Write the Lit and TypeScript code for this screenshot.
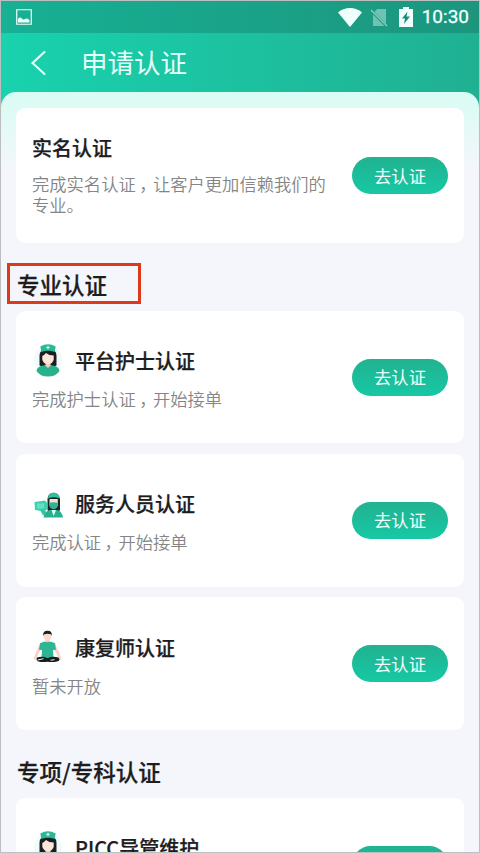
import { LitElement, html, css, svg } from "lit";
import { customElement, property } from "lit/decorators.js";

const nurse = svg`
  <circle cx="16" cy="17" r="14" fill="#f3fbfa"/>
  <path d="M7.500 13Q8 5 16 5t8.500 8v9.500Q21 24.500 16 24.500t-8.500-2z" fill="#182024"/>
  <path d="M4.500 28Q5 23.500 11 22.500l5-1 5 1q6 1 6.500 5.500-3.500 5.500-11.500 5.500T4.500 28z" fill="#28b28c"/>
  <path d="M13.500 18h5v4.800L16 25l-2.500-2.200z" fill="#f6cdb8"/>
  <path d="M10.300 13q2.200-1.200 3.700-3 3 2.500 7.700 2.500v4.500Q20 21 16 21.500q-4-.5-5.700-4.500z" fill="#fde6d9"/>
  <path d="M8.300 3.500Q16-.8 23.700 3.500L22.500 9Q16 6.500 9.500 9z" fill="#2bb896"/>
  <path d="M16 2.800v3.400M14.300 4.500h3.400" stroke="#d9fff4" stroke-width="1.200"/>`;

const staff = svg`
  <path d="M2.500 16 13 14.500l2 2v7l-3 2-9-1.500z" fill="#3ed0ad"/>
  <path d="M5 17.500h7v5H5z" fill="#65dec2"/>
  <path d="M8 24l4-1.500 3 5-4 2z" fill="#38c5a2"/>
  <path d="M15.500 13Q16 7 21.500 7T28 13v11q-2 3-6.500 3t-6-3z" fill="#1c2527"/>
  <path d="M11.500 31.500q1-6 6-7.500h8Q30 25.500 31 31.500z" fill="#25b18c"/>
  <path d="M17.500 13h8.300v6q-1 3.500-4.100 4Q18 22.500 17.500 19z" fill="#fbdccd"/>
  <path d="M17.500 16.800q4-1 8.300 0V20q-1.300 3-4.100 3.200-3-.2-4.200-3.200z" fill="#28b792"/>
  <path d="M16 12.500q0-6 5.700-6t5.800 6q-5.500-2.300-11.500 0z" fill="#2fc19d"/>
  <path d="m19.500 24 2.200 6 2.300-6z" fill="#e8fff8"/>`;

const therapist = svg`
  <path d="M8.500 13 4.500 21l-3 8 2 .8L7.500 22l4-6zM22.500 13l4 8 3 8-2 .8-4-7.800-4-6z" fill="#f6d5c5"/>
  <path d="M13.500 8h4v5h-4z" fill="#f2c5af"/>
  <ellipse cx="15.500" cy="6.200" rx="3.800" ry="4.700" fill="#fbdccc"/>
  <path d="M11.300 6Q10.500.8 15.500.8T19.700 6l-.8-1.800q-3.300-.8-6.600 0z" fill="#1b2022"/>
  <path d="M12.500 11.500q3 1.500 6 0l4.500 1.800 1 6.500-3 .2.500 7.500h-12L10 20l-3-.2 1-6.500z" fill="#2eb594"/>
  <path d="M5 27.500q5-1.500 10.500.2 5.500-1.700 11-.2 2.500 3-1.500 4-5 1-9.500.2-5 .8-9-.2-3-1-1.500-4z" fill="#171d1f"/>
  <path d="m5.500 30 6-1.300M18.500 30.200l4-.5" stroke="#edf4f2" stroke-width="1"/>`;

const icons: Record<string, unknown> = { nurse, staff, therapist };

const describe = (text: string) =>
  text.split("，").map((part, i) => (i ? html`<span class="comma">，</span>${part}` : part));

@customElement("cert-card")
export class CertCard extends LitElement {
  @property() heading = "";
  @property() note = "";
  @property() icon = "";

  static styles = css`
    :host {
      display: flex;
      align-items: center;
      justify-content: space-between;
      box-sizing: border-box;
      height: 132.800px;
      padding: 0 16px;
      border-radius: 9px;
      background: #fff;
      flex: none;
    }
    .info { width: 304px; padding-bottom: 2px; }
    .head { display: flex; align-items: center; height: 36px; gap: 11px; }
    .icon { width: 32px; height: 34px; flex: none; margin-bottom: 2px; }
    .heading {
      font-size: 20px;
      line-height: 28px;
      font-weight: 500;
      color: #1d1d1f;
      white-space: nowrap;
      -webkit-text-stroke: 0.25px #1d1d1f;
    }
    .note {
      margin-top: 9px;
      font-size: 17.3px;
      line-height: 21px;
      font-weight: 350;
      color: #858585;
    }
    .plain { padding-bottom: 2px; }
    .plain .head { height: 28px; }
    .plain .note { margin-top: 11.500px; line-height: 21px; }
    .comma { font-feature-settings: "halt"; padding: 0 0.3em 0 0.2em; }
    .go {
      width: 96px;
      height: 37px;
      padding: 0;
      border: 0;
      border-radius: 19px;
      background: linear-gradient(#21b291, #17c8a4);
      color: #effffb;
      font: 17.3px/36px "Noto Sans CJK SC", sans-serif;
    }
  `;

  render() {
    return html`
      <div class="info ${this.icon ? "" : "plain"}">
        <div class="head">
          ${this.icon
            ? html`<svg class="icon" viewBox="0 0 32 34">${icons[this.icon]}</svg>`
            : ""}
          <div class="heading">${this.heading}</div>
        </div>
        <div class="note">${describe(this.note)}</div>
      </div>
      <button class="go">去认证</button>
    `;
  }
}

@customElement("app-root")
export class AppRoot extends LitElement {
  static styles = css`
    :host {
      display: block;
      box-sizing: border-box;
      width: 480px;
      height: 853px;
      overflow: hidden;
      border: 1px solid #bbbfc0;
      font-family: "Noto Sans CJK SC", sans-serif;
      background: linear-gradient(90deg, #19d2ae, #20b092) 0 0 / 100% 130px no-repeat, #f4f6fb;
    }
    .status {
      display: flex;
      align-items: center;
      height: 32px;
      padding: 0 10px 0 15px;
      background: rgba(15, 45, 45, 0.2);
      color: #f1fffc;
    }
    .picture { width: 16px; height: 16px; margin-right: auto; }
    .wifi { width: 24px; height: 19px; }
    .sim { width: 18px; height: 19px; margin-left: 8px; }
    .battery { width: 14px; height: 20px; margin-left: 11px; }
    .time { margin-left: 9px; font: 400 19px/32px Roboto, sans-serif; -webkit-text-stroke: 0.3px; }
    .bar { display: flex; align-items: center; height: 59px; padding-left: 29px; }
    .back { width: 16px; height: 26px; }
    .title {
      margin-left: 35px;
      padding-bottom: 2px;
      font-size: 26.500px;
      line-height: 40px;
      color: #e6fff9;
    }
    .sheet {
      display: flex;
      flex-direction: column;
      height: 761px;
      box-sizing: border-box;
      padding: 16px 15px 0;
      border-radius: 15px 15px 0 0;
      background: linear-gradient(#d8fcf3, #f4f6fb 78px);
    }
    .first { height: 135px; }
    .section {
      height: 67.700px;
      padding: 9px 0 0 1px;
      box-sizing: border-box;
      flex: none;
      font-size: 22.500px;
      font-weight: 500;
      line-height: 65px;
      color: #1d1d1f;
      -webkit-text-stroke: 0.25px #1d1d1f;
    }
    .marked { position: relative; }
    .marked::after {
      content: "";
      position: absolute;
      left: -9px;
      top: 20px;
      width: 134px;
      height: 41px;
      box-sizing: border-box;
      border: 3px solid #dd3a1c;
    }
    .group { display: flex; flex-direction: column; gap: 10.600px; flex: none; }
  `;

  render() {
    return html`
      <div class="status">
        <svg class="picture" viewBox="0 0 16 16">
          <path d="M.75.75h14.500v14.500H.75z" fill="none" stroke="currentColor" stroke-width="1.200"/>
          <path d="M2 13.500V10l2-1.700 2.200 1.500 1.600 1 2-1.300 2.200.2 1.500 1.800v2z" fill="currentColor"/>
        </svg>
        <svg class="wifi" viewBox="0 0 24 19"><path d="M0 4.500Q5 0 12 0t12 4.500L12 19z" fill="currentColor"/></svg>
        <svg class="sim" viewBox="0 0 18 19">
          <path d="M7 1h9v14.500L4.500 4zM3 6.500 14.500 18H3z" fill="currentColor" opacity=".4"/>
          <path d="m1 2 16 16" stroke="currentColor" stroke-width="1.400" opacity=".5"/>
        </svg>
        <svg class="battery" viewBox="0 0 14 20">
          <path d="M4 0h6v2h4v18H0V2h4z" fill="currentColor"/>
          <path d="M8.500 4.500 3 11.500h3l-1 5.500 6-7.500H7.500z" fill="#1a8c76"/>
        </svg>
        <span class="time">10:30</span>
      </div>
      <div class="bar">
        <svg class="back" viewBox="0 0 16 26"><path d="M14.500 2 2.500 13l12 11" fill="none" stroke="#e6fff9" stroke-width="2.100" stroke-linecap="round"/></svg>
        <span class="title">申请认证</span>
      </div>
      <div class="sheet">
        <cert-card class="first" heading="实名认证" note="完成实名认证，让客户更加信赖我们的专业。"></cert-card>
        <div class="section marked">专业认证</div>
        <div class="group">
          <cert-card icon="nurse" heading="平台护士认证" note="完成护士认证，开始接单"></cert-card>
          <cert-card icon="staff" heading="服务人员认证" note="完成认证，开始接单"></cert-card>
          <cert-card icon="therapist" heading="康复师认证" note="暂未开放"></cert-card>
        </div>
        <div class="section">专项/专科认证</div>
        <cert-card icon="nurse" heading="PICC导管维护" note="完成认证，开始接单"></cert-card>
      </div>
    `;
  }
}
